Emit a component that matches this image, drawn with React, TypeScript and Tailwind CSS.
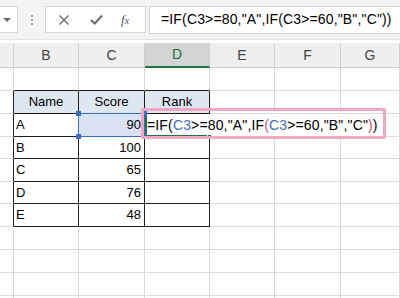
import React from "react";

const colWidths = [14, 65, 66, 65, 65, 66, 59];
const colNames = ["", "B", "C", "D", "E", "F", "G"];
const rowHeights = [23, 23, 23, 22, 23, 22, 23, 23, 23, 23, 23];

const table: string[][] = [
  ["Name", "Score", "Rank"],
  ["A", "90", ""],
  ["B", "100", ""],
  ["C", "65", ""],
  ["D", "76", ""],
  ["E", "48", ""],
];

function Formula({ colored }: { colored?: boolean }) {
  const ref = colored ? "text-[#3f6fc6]" : "";
  const paren = colored ? "text-[#cf4f74]" : "";
  return (
    <span className="whitespace-nowrap tracking-[0.15px]">
      =IF(<span className={ref}>C3</span>&gt;=80,"A",IF<span className={paren}>(</span>
      <span className={ref}>C3</span>&gt;=60,"B","C"<span className={paren}>)</span>)
    </span>
  );
}

function Handle({ className }: { className: string }) {
  return <div className={`absolute w-[5px] h-[5px] bg-[#3a6fc4] z-30 ${className}`} />;
}

function Cell({ r, c }: { r: number; c: number }) {
  const inTable = r >= 1 && r <= 6 && c >= 1 && c <= 3;
  const aboveTable = r === 0 && c >= 1 && c <= 3;
  const leftOfTable = r >= 1 && r <= 6 && c === 0;
  const rightBorder = inTable || leftOfTable ? "border-r-[#1f1f1f]" : "border-r-[#dadada]";
  const bottomBorder = inTable || aboveTable ? "border-b-[#1f1f1f]" : "border-b-[#dadada]";
  const isHeader = r === 1 && inTable;
  const selected = r === 2 && c === 2;
  const bg = isHeader ? "bg-[#dde7f2]" : selected ? "bg-[#d8e2f3]" : "bg-white";
  const text = inTable ? table[r - 1][c - 1] : "";
  const align = isHeader ? "justify-center" : c === 2 ? "justify-end pr-[3px]" : "pl-[2px]";

  return (
    <div
      className={`relative flex items-center border-r border-b ${rightBorder} ${bottomBorder} ${bg} ${align}`}
      style={{ height: rowHeights[r] }}
    >
      {text}
      {selected && (
        <>
          <div className="absolute inset-[-1px] border-[1.5px] border-[#3a6fc4] z-20" />
          <Handle className="left-[-3px] top-[-3px]" />
          <Handle className="left-[-3px] bottom-[-3px]" />
          <Handle className="right-[-3px] top-[-3px]" />
          <Handle className="right-[-3px] bottom-[-3px]" />
        </>
      )}
      {r === 2 && c === 3 && (
        <>
          <div className="absolute left-0 top-0 h-[22px] w-[234px] bg-white z-10 flex items-center pl-[2px] text-[14px] text-black">
            <Formula colored />
            <div className="ml-[2px] w-px h-[18px] bg-black" />
          </div>
          <div className="absolute left-0 top-0 h-[23px] w-[2px] bg-[#217346] z-20" />
          <div className="absolute left-0 bottom-[-1px] h-[2px] w-[64px] bg-[#217346] z-20" />
          <div className="absolute right-[-3px] bottom-[-3px] w-[5px] h-[5px] bg-[#217346] border border-white z-20" />
        </>
      )}
    </div>
  );
}

export default function App() {
  return (
    <div
      className="relative w-[400px] h-[298px] overflow-hidden bg-white text-[13px] text-black"
      style={{ fontFamily: '"Liberation Sans", Arial, sans-serif' }}
    >
      {/* formula bar */}
      <div className="h-[40px] bg-[#f3f3f3] flex items-center border-b border-[#e3e3e3]">
        <div className="w-[18px] h-[27px] bg-white border border-l-0 border-[#d4d4d4] flex items-center justify-center">
          <div className="w-0 h-0 border-l-[4px] border-r-[4px] border-t-[4px] border-l-transparent border-r-transparent border-t-[#6a6a6a] ml-[-4px]" />
        </div>
        <div className="w-[27px] flex flex-col items-center gap-[2px]">
          <div className="w-[2px] h-[2px] bg-[#a0a0a0]" />
          <div className="w-[2px] h-[2px] bg-[#a0a0a0]" />
          <div className="w-[2px] h-[2px] bg-[#a0a0a0]" />
        </div>
        <div className="w-[101px] h-[27px] bg-white border border-[#d4d4d4] flex items-center text-[#6b6b6b]">
          <svg width="12" height="12" viewBox="0 0 12 12" className="ml-[12px]">
            <path d="M1.5 1.5 L10.5 10.5 M10.5 1.5 L1.5 10.5" stroke="#6b6b6b" strokeWidth="1.4" fill="none" />
          </svg>
          <svg width="13" height="11" viewBox="0 0 13 11" className="ml-[20px]">
            <path d="M1 6 L4.8 9.5 L12 1.5" stroke="#6b6b6b" strokeWidth="2" fill="none" />
          </svg>
          <span className="ml-[18px] italic text-[13px] text-[#555]" style={{ fontFamily: '"Liberation Serif", serif' }}>
            f<span className="text-[10px]">x</span>
          </span>
        </div>
        <div className="ml-[3px] flex-1 h-[28px] bg-white border border-r-0 border-[#d4d4d4] flex items-center pl-[11px] text-[14px]">
          <Formula />
        </div>
      </div>
      <div className="h-[3px] bg-white" />

      {/* column headers */}
      <div className="flex h-[25px] bg-[#efefef]">
        {colNames.map((n, i) => (
          <div
            key={i}
            className={`flex items-center justify-center text-[14px] border-r border-[#cfcfcf] ${
              n === "D" ? "bg-[#d4d4d4] text-[#1e6b3e] border-b-2 border-b-[#217346]" : "text-[#444] border-b border-b-[#cfcfcf]"
            }`}
            style={{ width: colWidths[i] }}
          >
            {n}
          </div>
        ))}
      </div>

      {/* cells */}
      <div
        className="grid"
        style={{ gridTemplateColumns: colWidths.map((w) => `${w}px`).join(" ") }}
      >
        {rowHeights.map((_, r) =>
          colWidths.map((_, c) => <Cell key={`${r}-${c}`} r={r} c={c} />)
        )}
      </div>

      {/* annotation highlight */}
      <div className="absolute left-[141px] top-[108px] w-[245px] h-[31px] border-[3px] border-[#f3a6c6] rounded-[2px] z-40 pointer-events-none" />
    </div>
  );
}
